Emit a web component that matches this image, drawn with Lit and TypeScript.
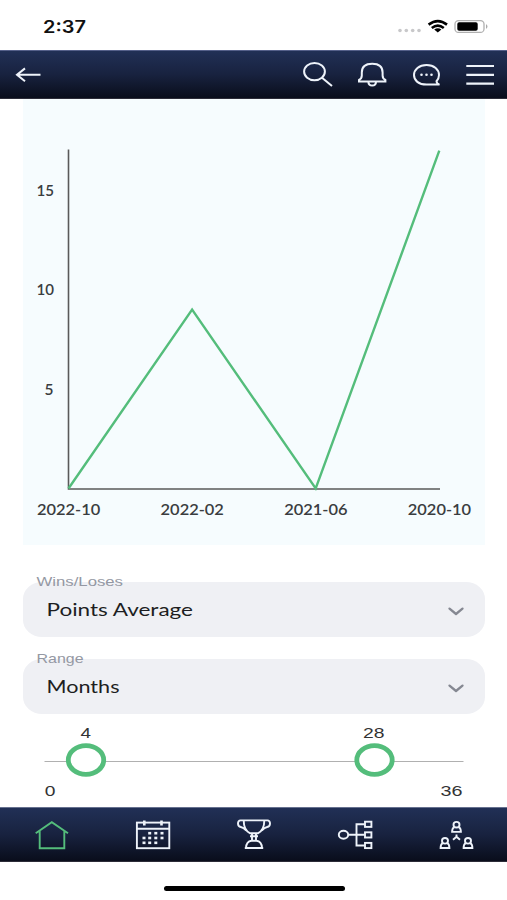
import { LitElement, html, svg, css } from "lit";
import { customElement, property } from "lit/decorators.js";

/* Text stretched horizontally to an exact width. */
const label = (x: number, y: number, w: number, text: string, cls: string) =>
  svg`<text class=${cls} x=${x} y=${y} textLength=${w} lengthAdjust="spacingAndGlyphs">${text}</text>`;

@customElement("status-bar")
class StatusBar extends LitElement {
  static styles = css`
    :host { display: flex; justify-content: space-between; height: 50px; background: #fff; }
    svg { display: block; }
    .time { font: 600 17px Inter, sans-serif; fill: #111; }
  `;
  render() {
    return html`
      <svg width="120" height="50">${label(43, 32.5, 43, "2:37", "time")}</svg>
      <svg width="117" height="50" viewBox="390 0 117 50">
        <g fill="#c8c8ca"><circle cx="400" cy="30.5" r="1.8"/><circle cx="406.3" cy="30.5" r="1.8"/><circle cx="412.7" cy="30.5" r="1.8"/><circle cx="419" cy="30.5" r="1.8"/></g>
        <g fill="none" stroke="#000" stroke-width="2.6">
          <path d="M428.6 24.6Q437.8 17.6 447 24.6"/><path d="M431.8 27.9Q437.8 23.2 443.8 27.9"/>
        </g>
        <path d="M434.2 29.6Q437.8 27 441.4 29.6L437.8 32.4Z"/>
        <rect x="455" y="20.6" width="29" height="11.8" rx="3.5" fill="none" stroke="#b0b0b0" stroke-width="1.3"/>
        <rect x="457.3" y="22.2" width="20.4" height="8.6" rx="1.8"/>
        <path d="M486 24q3 2.4 0 5z" fill="#aaa"/>
      </svg>`;
  }
}

@customElement("top-bar")
class TopBar extends LitElement {
  static styles = css`
    :host { display: flex; align-items: center; justify-content: space-between; height: 49px; box-sizing: border-box;
      background: linear-gradient(#213056, #18223f 50%, #090d1b); border-top: 1px solid #55608a; border-bottom: 1px solid #2c2c38; }
    svg { display: block; fill: none; stroke: #eef3fa; stroke-width: 2; }
  `;
  render() {
    return html`
      <svg width="60" height="47" viewBox="0 51 60 47"><path d="M40.5 74.8H17M25 68.4L17 74.8L25 81.2"/></svg>
      <svg width="217" height="47" viewBox="290 51 217 47">
        <ellipse cx="314.5" cy="71.6" rx="10.4" ry="8.7"/><path d="M322 77.8L332 86"/>
        <path d="M359 81.4V80q2.8-1.5 2.8-4.5V72.5q0-8.8 10.4-8.8t10.4 8.8V75.5q0 3 2.8 4.5V81.4z"/>
        <path d="M368.4 81.8q0 3.8 3.8 3.8t3.8-3.8"/>
        <path d="M439.5 84.6H426.5C418.6 84.6 414 80.5 414 75S419 65 426.6 65 439 69.5 439 75C439 77.5 438 79.6 436.5 81.2Q436.6 83.4 439.5 84.6Z"/>
        <g fill="#eef3fa" stroke="none"><circle cx="421.5" cy="74.8" r="1.3"/><circle cx="426.5" cy="74.8" r="1.3"/><circle cx="431.5" cy="74.8" r="1.3"/></g>
        <path d="M466.3 66H494M466.3 74.8H494M466.3 83.7H494" stroke-width="2.2"/>
      </svg>`;
  }
}

@customElement("line-chart")
class LineChart extends LitElement {
  static styles = css`
    :host { display: block; height: 446px; margin: 0 22px 0 23px; background: #f6fcfe; }
    svg { display: block; }
    .tick { font: 600 14.5px Lato, sans-serif; fill: #3a3d40; }
  `;
  render() {
    const values = [0, 9, 0, 17];
    const dates = ["2022-10", "2022-02", "2021-06", "2020-10"];
    const px = (i: number) => 68.5 + i * 123.6;
    const py = (v: number) => 488.5 - v * 19.87;
    return html`<svg width="462" height="446" viewBox="23 99 462 446">
      <path d="M68.5 149.5V489H440" fill="none" stroke="#5a5a5a" stroke-width="1.6"/>
      <polyline points=${values.map((v, i) => px(i) + "," + py(v)).join(" ")} fill="none" stroke="#54bd7b" stroke-width="2.4"/>
      ${label(36.5, 195.5, 17.5, "15", "tick")}
      ${label(36.5, 295.2, 17.5, "10", "tick")}
      ${label(44.5, 394.8, 9, "5", "tick")}
      ${dates.map((d, i) => label(px(i) - 31.5, 514.6, 63.3, d, "tick"))}
    </svg>`;
  }
}

@customElement("select-field")
class SelectField extends LitElement {
  @property() label = "";
  @property() value = "";
  @property({ type: Number }) labelWidth = 0;
  @property({ type: Number }) valueWidth = 0;
  static styles = css`
    :host { display: block; height: 55px; margin: 0 22px 0 23px; background: #eff0f4; border-radius: 19px / 17px; }
    svg { display: block; overflow: visible; }
    .cap { font: 400 13px "Liberation Sans", sans-serif; fill: #9498a3; }
    .val { font: 400 17.5px Lato, sans-serif; fill: #1d1e22; }
  `;
  render() {
    return html`<svg width="462" height="55">
      ${label(13.5, 4, this.labelWidth, this.label, "cap")}
      ${label(23.5, 33.7, this.valueWidth, this.value, "val")}
      <path d="M426.5 26.6L433 32L439.5 26.6" fill="none" stroke="#858892" stroke-width="2.3" stroke-linecap="round" stroke-linejoin="round"/>
    </svg>`;
  }
}

@customElement("range-slider")
class RangeSlider extends LitElement {
  static styles = css`
    :host { display: block; height: 93px; }
    svg { display: block; }
    .num { font: 400 15.5px "Liberation Sans", sans-serif; fill: #333; }
  `;
  render() {
    return html`<svg width="507" height="93" viewBox="0 714 507 93">
      <path d="M44.5 761.5H463.5" stroke="#b0b0b0"/>
      ${[86, 374.5].map((x) => svg`<ellipse cx=${x} cy="760" rx="17.7" ry="14.4" fill="#fff" stroke="#54bd7b" stroke-width="4.8"/>`)}
      ${label(80.5, 738.3, 10.5, "4", "num")}
      ${label(363, 738.3, 21.5, "28", "num")}
      ${label(44.8, 796, 10.7, "0", "num")}
      ${label(440.5, 796, 22, "36", "num")}
    </svg>`;
  }
}

@customElement("tab-bar")
class TabBar extends LitElement {
  static styles = css`
    :host { display: block; height: 55px; box-sizing: border-box; border-top: 1px solid #67718f; border-bottom: 1px solid #2c2c38;
      background: linear-gradient(#213056, #18223f 50%, #090d1b); }
    svg { display: block; fill: none; stroke: #eef3fa; stroke-width: 1.9; }
    .home { stroke: #54bd7b; }
    .dots { fill: #eef3fa; stroke: none; }
  `;
  render() {
    const dots = [[149.7, 833.2], [155.8, 833.2], [162, 833.2], [144, 838], [149.7, 838], [155.8, 838], [162, 838], [144, 842.8], [149.7, 842.8], [155.8, 842.8]];
    const person = (x: number, y: number) => svg`<ellipse cx=${x} cy=${y} rx="3" ry="2.8"/><path d=${`M${x - 2.2} ${y + 2.4}Q${x - 4.4} ${y + 3.4} ${x - 4.4} ${y + 7.2}H${x + 4.4}Q${x + 4.4} ${y + 3.4} ${x + 2.2} ${y + 2.4}M${x - 5.3} ${y + 7.2}H${x + 5.3}`}/>`;
    return html`<svg width="507" height="53" viewBox="0 808 507 53">
      <path class="home" d="M35.7 833.3L51.8 822.2L68 833.3M39.7 831V848.2H64.3V831"/>
      <rect x="136.9" y="822.6" width="32.4" height="25.6"/><path d="M136.9 828.8H169.3"/><path d="M144.3 820.4V825.4M161.5 820.4V825.4" stroke-width="2.6"/>
      <g class="dots">${dots.map(([x, y]) => svg`<rect x=${x - 1.5} y=${y - 1.3} width="3" height="2.6"/>`)}</g>
      <path d="M243.7 820.4H264.3C264.3 827 261.5 831.5 257.8 833.3H250.2C246.5 831.5 243.7 827 243.7 820.4ZM243.7 820.4H240.5C237.2 820.4 237 826.4 240.8 827Q243.5 827.4 246.3 830.5M264.3 820.4H267.5C270.8 820.4 271 826.4 267.2 827Q264.5 827.4 261.7 830.5M250 836.2H258M252 833.5V840.5M256 833.5V840.5M246 848Q246.3 841.5 251.5 840.8H256.5Q261.7 841.5 262 848ZM244.8 848H263.2"/>
      <ellipse cx="343.5" cy="834.7" rx="4.7" ry="4"/><path d="M348.2 834.7H364.5M364.5 824.3H356.5V845.5H364.5"/>
      ${[824.3, 834.9, 845.5].map((y) => svg`<rect x="365" y=${y - 2.6} width="6.4" height="5.2"/>`)}
      ${person(456.5, 824.7)}${person(445, 840.8)}${person(468, 840.8)}
      <path d="M456.5 834.5V837M453 839.7L456.5 836.8L460 839.7"/>
    </svg>`;
  }
}

@customElement("app-root")
class AppRoot extends LitElement {
  static styles = css`
    :host { display: flex; flex-direction: column; width: 507px; height: 900px; background: #fff; overflow: hidden; }
    .fields { display: flex; flex-direction: column; gap: 22px; padding-top: 37px; }
    .home-area { display: flex; flex: 1; justify-content: center; padding: 23.5px 0 0 1px; }
    .indicator { width: 181px; height: 5px; border-radius: 3px; background: #000; }
  `;
  render() {
    return html`
      <status-bar></status-bar>
      <top-bar></top-bar>
      <line-chart></line-chart>
      <div class="fields">
        <select-field label="Wins/Loses" value="Points Average" .labelWidth=${86.5} .valueWidth=${146.5}></select-field>
        <select-field label="Range" value="Months" .labelWidth=${47} .valueWidth=${73}></select-field>
      </div>
      <range-slider></range-slider>
      <tab-bar></tab-bar>
      <div class="home-area"><div class="indicator"></div></div>`;
  }
}
